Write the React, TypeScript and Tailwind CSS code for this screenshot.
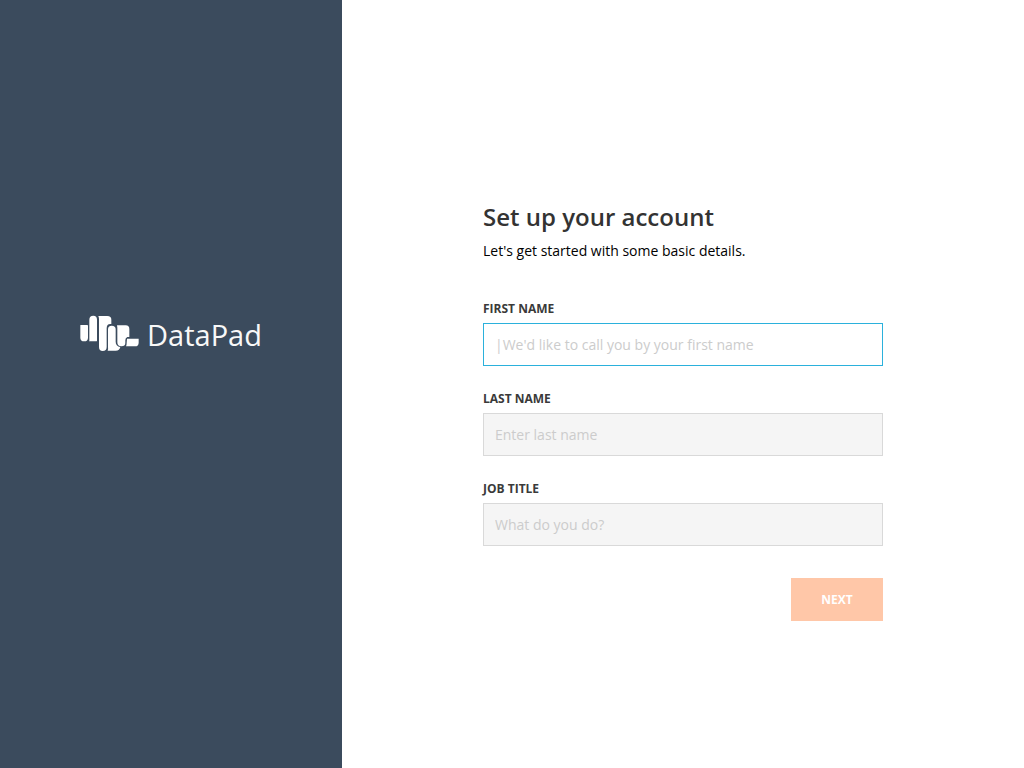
import type { InputHTMLAttributes } from "react";

function Logo() {
  return (
    <div className="flex items-center gap-2">
      <svg viewBox="0 0 177 111" className="h-[37px] w-[59px]" fill="#ffffff" aria-hidden="true">
        <path d="M2 30H22Q24 30 24 32V68Q24 79 12.500 79Q1 79 1 68V31Z" />
        <path d="M28 77V14Q28 2 40 2Q51 2 51 14V77Q51 79 49 79H27Z" />
        <path d="M56 3H82Q94 3 94 14V27Q80 25 80 40V96Q80 108 68 108Q57 108 57 96V12Q57 7 55 3Z" />
        <path d="M84 43Q84 32 95 32Q107 32 107 43V80Q107 93 121 96Q119 107 107 107H83Q85 102 84 96Z" />
        <path d="M111 31H137Q148 31 148 42V66H142Q136 68 136 76V84Q136 94 124 94Q112 94 112 82V38Z" />
        <path d="M141 71H176V83Q176 94 165 94H138Q140 90 140 83Z" />
      </svg>
      <span className="pt-1 text-[29px] leading-10 text-[#f8f8f8]">DataPad</span>
    </div>
  );
}

interface FieldProps extends InputHTMLAttributes<HTMLInputElement> {
  id: string;
  label: string;
}

function Field({ id, label, ...rest }: FieldProps) {
  return (
    <div className="flex flex-col gap-1">
      <label htmlFor={id} className="text-xs leading-5 font-bold text-[#3a3a3a] uppercase">
        {label}
      </label>
      <input
        id={id}
        name={id}
        className="h-[43px] w-full border border-[#d9d9d9] bg-[#f5f5f5] px-[11px] text-sm text-[#333333] outline-none placeholder:text-[#cccccc] data-[active=true]:border-[#2bb1dc] data-[active=true]:bg-white"
        {...rest}
      />
    </div>
  );
}

export default function App() {
  return (
    <div className="flex min-h-screen bg-white font-['Open_Sans',sans-serif]">
      <aside className="flex w-[33.4%] items-center justify-center bg-[#3b4b5d] pb-[102px]">
        <Logo />
      </aside>
      <main className="flex flex-1 items-center justify-center">
        <form className="mt-[54px] flex w-full max-w-[400px] flex-col" onSubmit={(e) => e.preventDefault()}>
          <h1 className="text-2xl leading-8 font-semibold text-[#333333]">Set up your account</h1>
          <p className="mt-2 text-sm leading-5 text-black">Let's get started with some basic details.</p>
          <div className="mt-[38px] flex flex-col gap-[23px]">
            <Field id="first-name" label="First name" placeholder="|We'd like to call you by your first name" data-active="true" />
            <Field id="last-name" label="Last name" placeholder="Enter last name" />
            <Field id="job-title" label="Job title" placeholder="What do you do?" />
          </div>
          <button type="submit" className="mt-8 h-[43px] w-[92px] self-end bg-[#ffc7a8] text-xs font-bold text-white uppercase">
            Next
          </button>
        </form>
      </main>
    </div>
  );
}
